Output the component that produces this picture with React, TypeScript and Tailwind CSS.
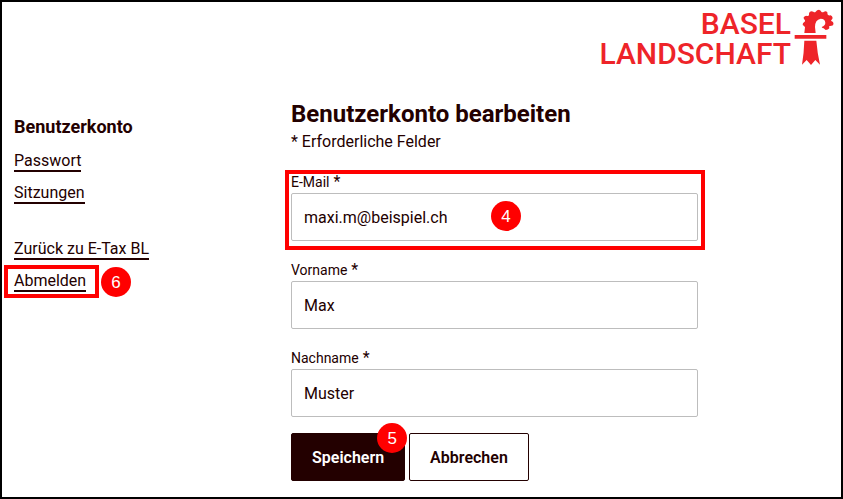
import { useState, type ReactNode } from "react";

function Crosier() {
  return (
    <svg viewBox="0 0 126 168" className="h-14 w-[42px] shrink-0" fill="#ee2429" aria-hidden="true">
      <path d="M34 72 L36 55 Q34 50 29 48 Q29 42 33 40 Q37 38 36 34 Q31 30 32 25 Q37 19 42 21 Q47 22 48 18 Q47 11 51 8 Q56 5 61 8 Q65 11 68 8 Q72 2 78 2 Q83 4 85 8 Q88 11 93 8 Q99 5 103 10 Q103 16 105 18 Q108 20 113 19 Q118 21 119 27 Q117 32 114 34 Q115 37 120 39 Q123 44 120 49 Q114 52 109 51 Q108 54 109 58 Q105 63 98 63 Q94 60 92 58 Q88 58 86 54 Q97 50 97 41 Q96 29 83 29 Q66 32 66 54 L68 72 Z" />
      <path d="M5 78 H100 V89 H5 Z" />
      <path d="M34 95 H70 Q73 132 81 167 L67 153 L54 168 L41 153 L27 167 Q33 130 34 95 Z" />
    </svg>
  );
}

function Logo() {
  return (
    <div className="flex items-start gap-0.5 text-[#ee2429]">
      <div className="text-right text-3xl leading-[30px] font-medium">
        <div>BASEL</div>
        <div>LANDSCHAFT</div>
      </div>
      <Crosier />
    </div>
  );
}

function Badge({ children, className }: { children: ReactNode; className: string }) {
  return (
    <span
      className={`absolute z-10 flex size-[30px] items-center justify-center rounded-full bg-[#ff0000] pt-px font-['Liberation_Sans',sans-serif] text-[17px] font-normal text-white ${className}`}
    >
      {children}
    </span>
  );
}

function NavLink({ children }: { children: ReactNode }) {
  return (
    <a href="#" className="inline-block border-b-2 border-[#230000] leading-[18px]">
      {children}
    </a>
  );
}

function Field({ id, label, type = "text", initial, children }: { id: string; label: string; type?: string; initial: string; children?: ReactNode }) {
  const [value, setValue] = useState(initial);
  return (
    <div className="relative mb-4">
      <label htmlFor={id} className="block pt-0.5 leading-[22px]">
        <span className="text-sm leading-[22px]">{label}</span> *
      </label>
      <input
        id={id}
        type={type}
        required
        value={value}
        onChange={(e) => setValue(e.target.value)}
        className="block h-12 w-full rounded-xs border border-[#bdbdbd] px-3 text-base outline-none"
      />
      {children}
    </div>
  );
}

export default function App() {
  return (
    <div className="min-h-screen border-2 border-black bg-white font-['Roboto',sans-serif] text-base text-[#230000]">
      <header className="flex h-24 justify-end pt-[7px] pr-[6px]">
        <Logo />
      </header>
      <div className="flex">
        <nav className="w-[289px] shrink-0 pt-[17px] pl-3">
          <h2 className="mb-[13px] text-lg leading-6 font-bold">Benutzerkonto</h2>
          <ul className="mb-9 flex flex-col items-start gap-3">
            <li className="flex"><NavLink>Passwort</NavLink></li>
            <li className="flex"><NavLink>Sitzungen</NavLink></li>
          </ul>
          <ul className="flex flex-col items-start gap-3">
            <li className="flex"><NavLink>Zurück zu E-Tax BL</NavLink></li>
            <li className="relative flex">
              <NavLink>Abmelden</NavLink>
              <span className="pointer-events-none absolute -top-[7px] -right-[13px] -bottom-[6px] -left-[10px] border-4 border-[#ff0000]" />
              <Badge className="-top-[5px] left-[87px]">6</Badge>
            </li>
          </ul>
        </nav>
        <main className="mr-[143px] min-w-0 flex-1">
          <h1 className="text-2xl leading-8 font-bold">Benutzerkonto bearbeiten</h1>
          <p className="mb-[15px] leading-6">* Erforderliche Felder</p>
          <form onSubmit={(e) => e.preventDefault()}>
            <Field id="email" label="E-Mail" type="email" initial="maxi.m@beispiel.ch">
              <span className="pointer-events-none absolute top-px -right-[7px] -bottom-[9px] -left-[6px] border-4 border-[#ff0000]" />
              <Badge className="top-8 left-[200px]">4</Badge>
            </Field>
            <Field id="firstName" label="Vorname" initial="Max" />
            <Field id="lastName" label="Nachname" initial="Muster" />
            <div className="flex gap-1">
              <button type="submit" className="relative h-12 rounded-xs border border-[#230000] bg-[#230000] px-5 pt-0.5 font-semibold text-white">
                Speichern
                <Badge className="-top-[11px] -right-[3px]">5</Badge>
              </button>
              <button type="button" className="h-12 rounded-xs border border-[#230000] bg-white px-5 pt-0.5 font-semibold">
                Abbrechen
              </button>
            </div>
          </form>
        </main>
      </div>
    </div>
  );
}
